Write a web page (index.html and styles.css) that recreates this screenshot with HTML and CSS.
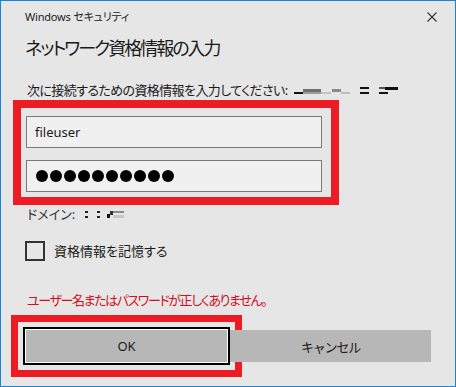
FILE: index.html
```html
<!DOCTYPE html>
<html lang="ja">
<head>
    <meta charset="UTF-8">
    <meta name="viewport" content="width=device-width, initial-scale=1.0">
    <title>Windows セキュリティ</title>
    <link rel="stylesheet" href="styles.css">
</head>
<body>
<div class="dialog">
    <div class="titlebar">
        <span class="app-name">Windows セキュリティ</span>
        <svg class="close" width="10" height="10" viewBox="0 0 10 10">
            <path d="M0.5 0.5 L9.5 9.5 M9.5 0.5 L0.5 9.5" stroke="#333" stroke-width="1.1" fill="none"/>
        </svg>
    </div>

    <h1 class="heading">ネットワーク資格情報の入力</h1>

    <p class="prompt">次に接続するための資格情報を入力してください:
        <!-- server name is blurred in the original -->
        <svg class="redact" width="106" height="10" viewBox="0 0 106 10">
            <rect x="0" y="6" width="9" height="2" fill="#111"/>
            <rect x="9" y="3" width="18" height="3" fill="#6e6e6e"/>
            <rect x="9" y="6" width="18" height="2" fill="#9a9a9a"/>
            <rect x="27" y="6" width="10" height="2" fill="#c4c4c4"/>
            <rect x="38" y="3" width="9" height="3" fill="#8a8a8a"/>
            <rect x="47" y="6" width="9" height="2" fill="#bdbdbd"/>
            <rect x="66" y="1" width="9" height="2" fill="#111"/>
            <rect x="66" y="6" width="9" height="2" fill="#111"/>
            <rect x="85" y="1" width="6" height="2" fill="#555"/>
            <rect x="91" y="1" width="13" height="3" fill="#111"/>
            <rect x="85" y="6" width="9" height="2" fill="#111"/>
        </svg>
    </p>

    <div class="highlight fields">
        <div class="field">fileuser</div>
        <div class="field password">
            <span class="dot"></span><span class="dot"></span><span class="dot"></span><span class="dot"></span><span class="dot"></span>
            <span class="dot"></span><span class="dot"></span><span class="dot"></span><span class="dot"></span><span class="dot"></span>
        </div>
    </div>

    <p class="domain">ドメイン:
        <svg class="redact" width="44" height="12" viewBox="0 0 44 12">
            <rect x="2" y="3" width="3" height="2" fill="#222"/>
            <rect x="2" y="8" width="3" height="2" fill="#222"/>
            <rect x="14" y="3" width="3" height="2" fill="#222"/>
            <rect x="14" y="8" width="3" height="2" fill="#222"/>
            <rect x="24" y="6" width="3" height="4" fill="#111"/>
            <rect x="27" y="3" width="3" height="4" fill="#333"/>
            <rect x="30" y="3" width="11" height="2" fill="#8c8c8c"/>
            <rect x="30" y="7" width="11" height="3" fill="#c8c8c8"/>
        </svg>
    </p>

    <label class="remember">
        <span class="checkbox"></span>
        <span>資格情報を記憶する</span>
    </label>

    <p class="error">ユーザー名またはパスワードが正しくありません。</p>

    <div class="buttons">
        <button class="btn btn-ok">OK</button>
        <button class="btn btn-cancel">キャンセル</button>
    </div>
</div>
</body>
</html>
```

FILE: styles.css
```css
body {
    margin: 0;
    padding: 0;
    font-family: "Noto Sans", "Noto Sans CJK JP", sans-serif;
    font-feature-settings: "palt";
    color: #1a1a1a;
}

.dialog {
    width: 456px;
    height: 387px;
    box-sizing: border-box;
    border: 1px solid #1883d7;
    background-color: #e6e6e6;
    padding: 0 24px;
}

.titlebar {
    display: flex;
    justify-content: space-between;
    align-items: center;
    margin-top: 8px;
    height: 16px;
    margin-right: -6px;
}

.app-name {
    font-size: 11px;
    line-height: 16px;
    letter-spacing: -0.2px;
    color: #222;
}

.heading {
    margin: 11px 0 0;
    font-size: 18px;
    font-weight: normal;
    line-height: 24px;
    letter-spacing: -2px;
    color: #1a1a1a;
}

.prompt,
.domain,
.error {
    margin: 0;
    font-size: 13px;
    line-height: 18px;
}

.prompt {
    margin-top: 21px;
    margin-left: 2px;
    letter-spacing: -0.6px;
    white-space: nowrap;
}

.redact {
    vertical-align: -1px;
    margin-left: 4px;
}

.highlight {
    border: 8px solid #ed1c24;
}

.fields {
    margin: 1px 0 0 -12px;
    width: 326px;
    box-sizing: border-box;
    padding: 8px 9px 5px 5px;
    display: flex;
    flex-direction: column;
    gap: 12px;
}

.field {
    height: 32px;
    box-sizing: border-box;
    border: 1px solid #7a7a7a;
    background-color: #f0f0f0;
    padding: 0 8px;
    display: flex;
    align-items: center;
    font-size: 13px;
}

.password {
    gap: 2px;
    padding-left: 9px;
}

.dot {
    width: 12px;
    height: 12px;
    border-radius: 50%;
    background-color: #000;
}

.domain {
    margin-left: 2px;
    color: #333;
}

.remember {
    display: flex;
    align-items: center;
    gap: 9px;
    margin-top: 18px;
    font-size: 13px;
    line-height: 20px;
}

.checkbox {
    width: 20px;
    height: 20px;
    box-sizing: border-box;
    border: 2px solid #333;
}

.error {
    margin-top: 30px;
    margin-left: 2px;
    font-size: 13px;
    letter-spacing: -1.4px;
    color: #d0101c;
}

.buttons {
    display: flex;
    align-items: center;
    margin-top: 18px;
}

.btn {
    font-family: inherit;
    font-size: 13px;
    color: #1a1a1a;
    background-color: #b7b7b7;
    border: none;
    padding: 0;
    height: 32px;
}

.btn-ok {
    width: 207px;
    height: 38px;
    margin-left: -2px;
    border: 2px solid #000;
    box-shadow: inset 0 0 0 1px #fff;
    outline: 7px solid #ed1c24;
    outline-offset: 5px;
}

.btn-cancel {
    flex: 1;
    letter-spacing: -1.2px;
}
```
